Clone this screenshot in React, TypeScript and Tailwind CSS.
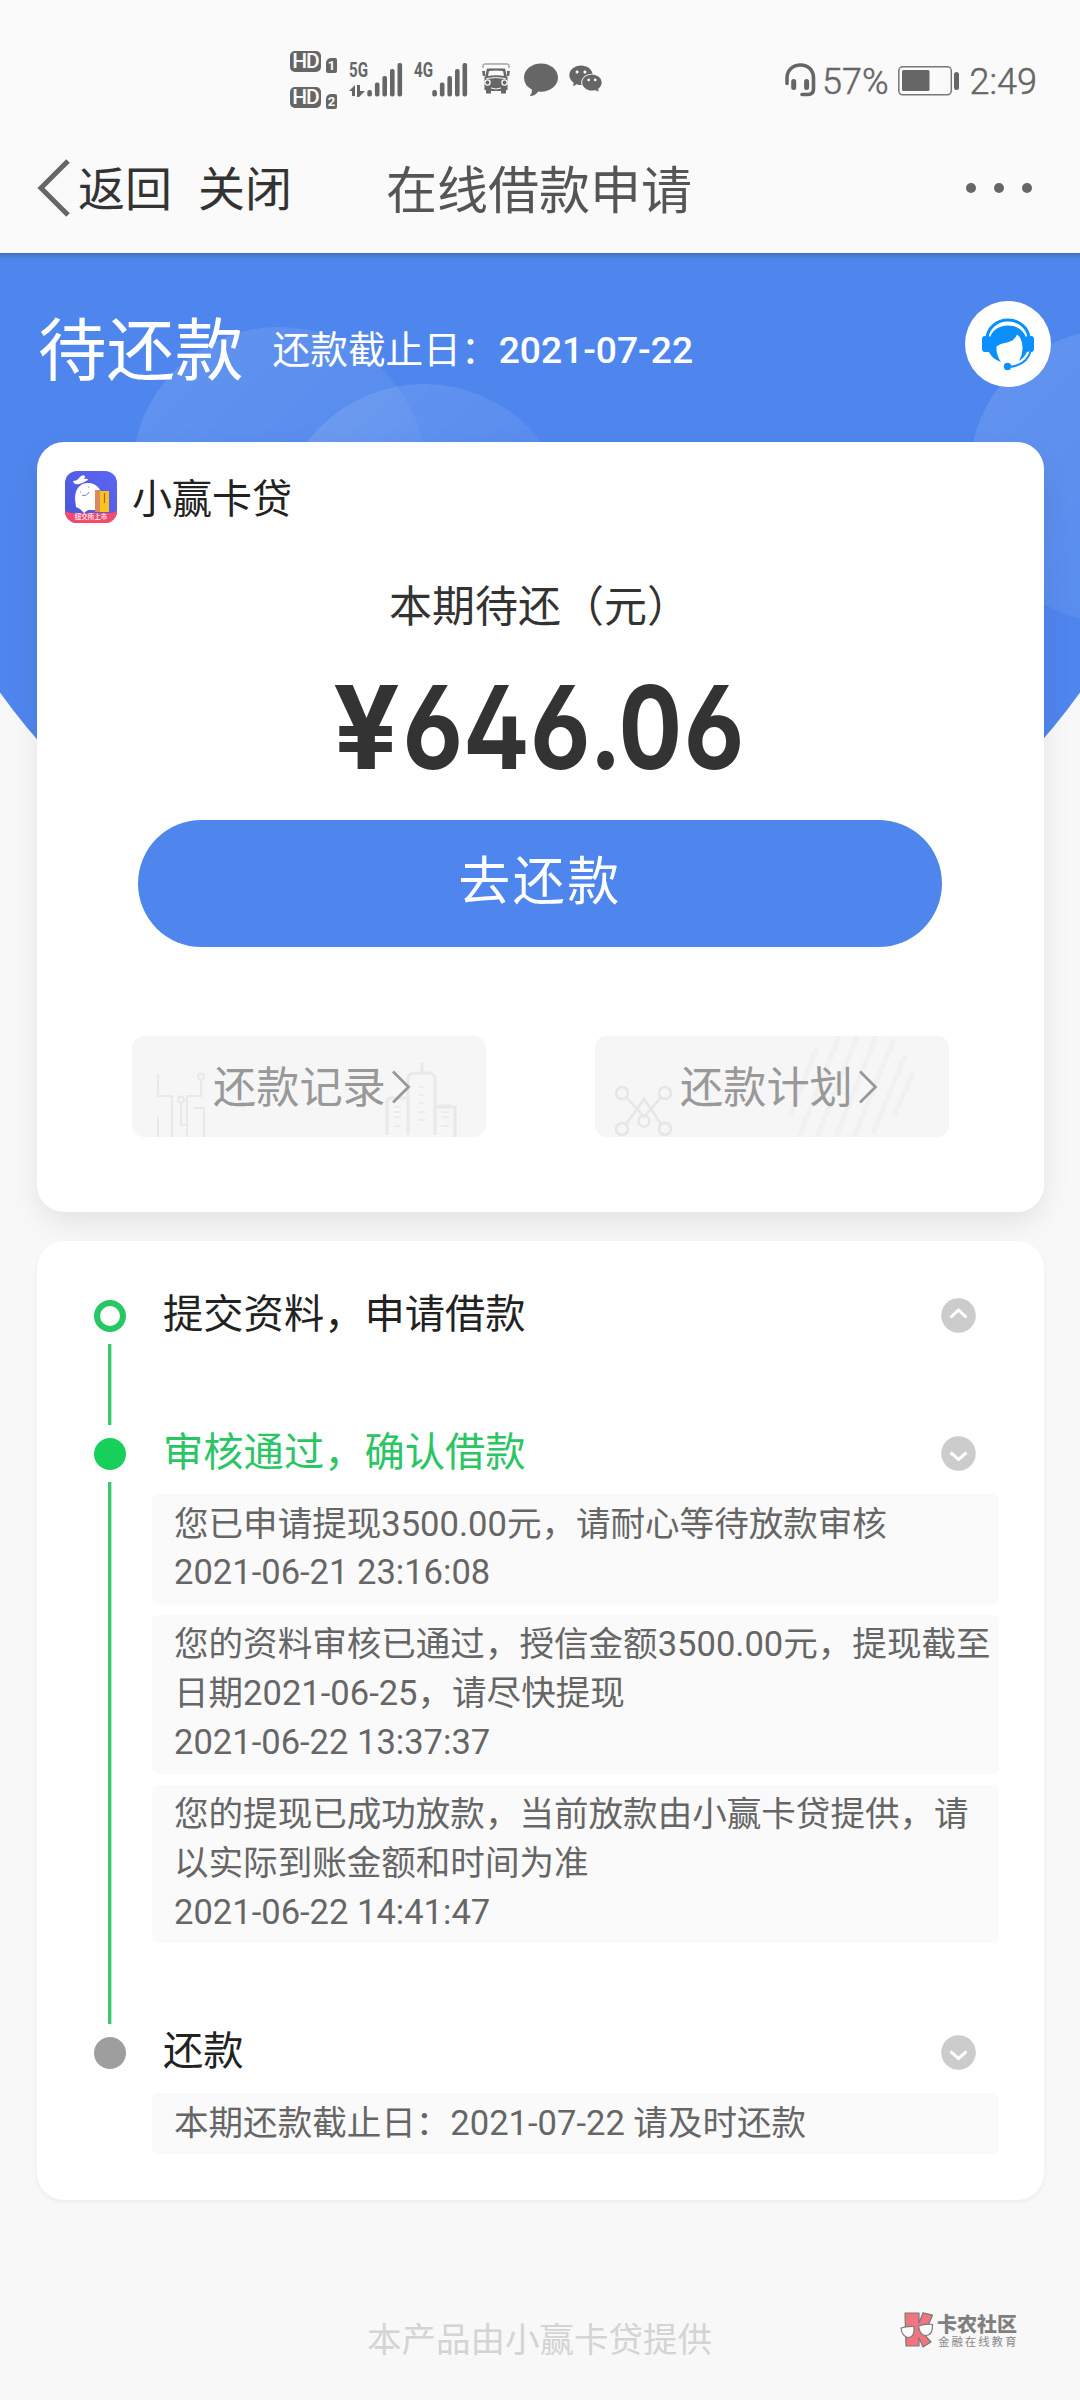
import React from "react";
import { AiFillWechat } from "react-icons/ai";

const CJK = "font-[Roboto,'Noto_Sans_CJK_SC',sans-serif]";

function HdBadge({ sim }: { sim: string }) {
  return (
    <div className="flex h-[22px] items-start gap-[5px]">
      <span className="flex h-[21px] w-[31px] items-center justify-center rounded-[5px] bg-[#666] text-[21px] font-medium leading-none tracking-[-1px] text-[#fafafa]">
        HD
      </span>
      <span className="mt-[7px] flex h-[15px] w-[11px] items-center justify-center rounded-[2px] rounded-tl-[5px] bg-[#666] text-[13px] font-bold leading-none text-[#fafafa]">
        {sim}
      </span>
    </div>
  );
}

function Signal({ label, arrows }: { label: string; arrows?: boolean }) {
  return (
    <div className="relative h-[34px] w-[54px]">
      <span className="absolute left-0 top-0 origin-left scale-x-[.72] text-[21px] font-bold leading-[15px] text-[#666]">
        {label}
      </span>
      <svg className="absolute inset-0" width="54" height="34" viewBox="0 0 54 34" fill="#666">
        {arrows && <path d="M0 28l6-6v11h-3v-5zM8 22h3v6h5l-6 6h-2z" />}
        <rect x="18.3" y="27" width="4.6" height="6.5" rx="2" />
        <rect x="25.9" y="19.5" width="4.6" height="14" rx="2" />
        <rect x="33.4" y="13" width="4.6" height="20.5" rx="2" />
        <rect x="41" y="6" width="4.6" height="27.5" rx="2" />
        <rect x="48.5" y="0" width="4.6" height="33.5" rx="2" />
      </svg>
    </div>
  );
}

function Truck() {
  return (
    <svg width="28" height="32" viewBox="0 0 28 32" fill="#666">
      <path d="M1 5V2.5Q1 1 2.5 1h23Q27 1 27 2.5V5" fill="none" stroke="#777" strokeWidth="1" />
      <path fillRule="evenodd" d="M5 5.5h18l2 8.500h.5v13H24v3.500h-5V28H9v2.500H4V27H2.500V14H3zM7 8l-1 5q8-1.500 16 0l-1-5q-7-.800-14 0z" />
      <path d="M0 8h3v5H1zM25 8h3l-1 5h-2z" />
      <circle cx="5.500" cy="19.500" r="2.600" fill="#666" stroke="#fafafa" strokeWidth="1.300" />
      <circle cx="22.500" cy="19.500" r="2.600" fill="#666" stroke="#fafafa" strokeWidth="1.300" />
      <path d="M9 25q5 2 10 0M4.500 15.500q9-2 19 0" fill="none" stroke="#fafafa" strokeWidth="1" />
    </svg>
  );
}

function Bubble() {
  return (
    <svg width="34" height="34" viewBox="0 0 34 34" fill="#666">
      <path d="M17 .5C26.500.5 34 6.800 34 14.500S26.500 28.700 17 28.700q-1.500 0-2.700-.200Q11 33 5.800 33q2.500-2.600 2.200-6.300Q0 22.500 0 14.500C0 6.800 7.500.5 17 .5z" />
    </svg>
  );
}

function StatusBar() {
  return (
    <div className="flex h-[125px] pl-[290px] pr-[43px] text-[#666]">
      <div className="mt-[51px] flex flex-col gap-[14px]">
        <HdBadge sim="1" />
        <HdBadge sim="2" />
      </div>
      <div className="mt-[63px] flex h-[34px] gap-[11px] pl-[12px]">
        <Signal label="5G" arrows />
        <Signal label="4G" />
      </div>
      <div className="mt-[63px] flex h-[34px] pl-[14px]">
        <Truck />
        <div className="pl-[14px]">
          <Bubble />
        </div>
        <AiFillWechat className="-mt-[3px] ml-[9px] size-[37px] text-[#666]" />
      </div>
      <div className="ml-auto mt-[61px] flex h-[40px] items-center">
        <svg className="-mt-[2px]" width="31" height="34" viewBox="0 0 31 34" fill="none" stroke="#666" strokeWidth="3.6" strokeLinecap="round">
          <path d="M2 20.500V15C2 7 8 2 15.500 2S28.500 7 28.500 15v11q0 5.500-5.500 5.500h-6" />
          <path d="M8.700 18.500v6M21.600 18.500v6" strokeWidth="5" />
        </svg>
        <span className="ml-[6px] mt-[2px] text-[36px] font-light leading-none [-webkit-text-stroke:.5px_#666]">57%</span>
        <svg className="-mt-[1px] ml-[9px]" width="62" height="30" viewBox="0 0 62 30">
          <rect x=".8" y=".8" width="52.500" height="28" rx="4" fill="none" stroke="#777" strokeWidth="1.500" />
          <rect x="4" y="4" width="27.500" height="21" rx="1.500" fill="#666" />
          <rect x="56" y="6" width="5" height="18" rx="2.500" fill="#666" />
        </svg>
        <span className="ml-[10px] mt-[2px] text-[36px] font-light leading-none [-webkit-text-stroke:.5px_#666]">2:49</span>
      </div>
    </div>
  );
}

function NavBar() {
  return (
    <div className="relative flex h-[128px] items-center pb-[2px] pl-[36px] pr-[48px]">
      <svg width="36" height="60" viewBox="0 0 36 60" fill="none" stroke="#666" strokeWidth="5">
        <path d="M32 3L5 30l27 27" />
      </svg>
      <span className="ml-[6px] mt-[3px] text-[47px] leading-none text-[#333]">返回</span>
      <span className="ml-[26px] mt-[3px] text-[47px] leading-none text-[#333]">关闭</span>
      <span className="ml-[94px] mt-[6px] text-[51px] leading-none text-[#555]">在线借款申请</span>
      <span className="ml-auto flex gap-[18px]">
        <i className="size-[10px] rounded-full bg-[#666]" />
        <i className="size-[10px] rounded-full bg-[#666]" />
        <i className="size-[10px] rounded-full bg-[#666]" />
      </span>
    </div>
  );
}

function Backdrop() {
  return (
    <div className="absolute inset-x-0 top-0 h-[740px] overflow-hidden">
      <div className="absolute -left-[124px] -top-[611px] size-[1328px] rounded-full bg-[#4f86ed]" />
      <div className="absolute left-[132px] top-[74px] size-[294px] rounded-full bg-linear-to-br from-white/12 to-transparent" />
      <div className="absolute left-[277px] top-[131px] size-[294px] rounded-full bg-linear-to-br from-white/13 to-transparent" />
      <div className="absolute left-[969px] top-[76px] size-[294px] rounded-full bg-linear-to-br from-white/12 to-white/2" />
      <div className="absolute inset-x-0 top-0 h-[6px] bg-linear-to-b from-[#4470b5] to-transparent" />
    </div>
  );
}

function ServiceIcon() {
  return (
    <svg width="54" height="54" viewBox="0 0 54 54">
      <path d="M6 22a21 19 0 0 1 42 0" fill="none" stroke="#0b90fb" strokeWidth="3" />
      <path
        d="M8 35V24C10 13 18 8.500 27 8.500S44 13 46 24v11q-3 6-8 9 4-7 3.500-14-.5-9-5.500-12.500-2 6-10 8-7 1-10.500 4Q15 38 20 45 11 42 8 35z"
        fill="#0b90fb"
      />
      <rect x="1" y="19" width="9" height="16" rx="3" fill="#0b90fb" />
      <rect x="44" y="19" width="9" height="16" rx="3" fill="#0b90fb" />
      <path d="M50 35Q46 49 27 50" fill="none" stroke="#fff" strokeWidth="5" />
      <path d="M50 33Q46 49 27 50" fill="none" stroke="#0b90fb" strokeWidth="2" />
      <circle cx="26.500" cy="49.500" r="3.700" fill="#0b90fb" />
    </svg>
  );
}

function AppLogo() {
  return (
    <div className="relative size-[52px] overflow-hidden rounded-[12px] bg-linear-to-bl from-[#5e66f2] to-[#4a55dd]">
      <svg className="absolute inset-0" width="52" height="52" viewBox="0 0 52 52">
        <path d="M10 28c0-10 5-16 13-16 9 0 14 7 14 15v12H23l-4 3-4-4-4-2z" fill="#fff" />
        <path d="M8 10q4 0 6-3 3-4 6-2 0 2-1 3 4-1 4 1-5 3-9 4-5 1-6-3z" fill="#fff" />
        <path d="M17 24q4 2 7-3M15 21h1M23 16h1" stroke="#7b78c8" fill="none" strokeWidth="1" />
        <rect x="30" y="19" width="5" height="22" fill="#d98a5f" />
        <rect x="35" y="20" width="9" height="21" fill="#f9c31f" />
        <path d="M39.500 22v10" stroke="#a66a15" strokeWidth="1.200" />
        <path d="M0 40l6 2h40l6-2v12H0z" fill="#f4496b" />
      </svg>
      <span className="absolute inset-x-0 bottom-[2px] text-center text-[6.500px] font-medium leading-[8px] text-white">纽交所上市</span>
    </div>
  );
}

function Chevron() {
  return (
    <svg className="-mt-[3px] ml-[5px]" width="20" height="34" viewBox="0 0 20 34" fill="none" stroke="#999" strokeWidth="2.800">
      <path d="M2 1.500L17.500 17 2 32.500" />
    </svg>
  );
}

function CityArt() {
  return (
    <svg className="absolute inset-0" width="354" height="101" viewBox="0 0 354 101" fill="none" stroke="#e9e9e9" strokeWidth="2">
      <path d="M26 38v22h14v41M26 81v20M69 44v16H55v41M49 67v22h6M62 72h10v29" />
      <circle cx="69" cy="40.500" r="3" />
      <circle cx="49" cy="63.500" r="3" />
      <path strokeWidth="3" d="M255 99V66q0-4 4-4h15M276 99V43q0-6 7-6h13q7 0 7 6v56M290 27v10M303 99V71h20v30M307 70h13" />
      <path strokeWidth="1.500" d="M286 51h7M286 59h7M286 67h7M286 76h7M286 84h7M262 71h7M262 76h7M262 81h7M262 90h7M309 76h8M309 81h8M309 90h8" />
    </svg>
  );
}

function NodesArt() {
  return (
    <svg className="absolute inset-0" width="354" height="101" viewBox="0 0 354 101" fill="none" stroke="#e6e6e6" strokeWidth="2.500">
      <circle cx="27" cy="57" r="6" />
      <circle cx="70" cy="57" r="6" />
      <circle cx="27" cy="93" r="6" />
      <circle cx="70" cy="93" r="6" />
      <circle cx="49" cy="85" r="5.500" />
      <path d="M31 61l11 12 7-10 7 10 10-12M31 88l11-15 7 8 7-8 10 15" />
      <path
        stroke="#f1f1f1"
        strokeWidth="5"
        d="M222 12L195 80M244 0L204 101M262 0L222 101M281 0L241 101M299 3L259 101M310 20L278 97M318 37L299 80"
      />
    </svg>
  );
}

function LinkTile({ label, art, className }: { label: string; art: React.ReactNode; className: string }) {
  return (
    <div className={`relative flex h-[101px] w-[354px] items-center overflow-hidden rounded-[12px] bg-[#f6f6f6] pt-[4px] ${className}`}>
      {art}
      <span className="relative flex items-center text-[43.200px] font-normal leading-none text-[#999]">
        {label}
        <Chevron />
      </span>
    </div>
  );
}

function Amount() {
  return (
    <div className="mt-[39px] flex h-[120px] whitespace-nowrap pl-[296px] font-[Inter,sans-serif] text-[115px] font-bold leading-[120px] text-[#333] [font-feature-settings:'cv02','cv03','tnum']">
      <span className="w-[68px] origin-left scale-x-[1.02]">¥</span>
      <span className="origin-left scale-x-[.857]">646.06</span>
    </div>
  );
}

function LoanCard() {
  return (
    <section className="relative mx-[37px] flex h-[770px] w-[1007px] flex-col rounded-[27px] bg-white shadow-[0_12px_32px_-4px_rgba(0,0,0,0.1)]">
      <div className="mt-[29px] flex h-[52px] items-center gap-[15px] pl-[28px]">
        <AppLogo />
        <span className="mt-[5px] text-[40px] leading-none text-[#222]">小赢卡贷</span>
      </div>
      <div className="mt-[62px] pl-[352px] text-[43px] leading-[44px] text-[#333]">本期待还（元）</div>
      <Amount />
      <button className="ml-[101px] mt-[32px] flex h-[127px] w-[804px] items-center justify-center rounded-full bg-[#4f86ed] pb-[1px] text-[52px] leading-none tracking-[2.500px] text-white">
        去还款
      </button>
      <div className="ml-[95px] mt-[89px] flex gap-[109px]">
        <LinkTile label="还款记录" art={<CityArt />} className="pl-[81px]" />
        <LinkTile label="还款计划" art={<NodesArt />} className="pl-[85px]" />
      </div>
    </section>
  );
}

function Toggle({ up }: { up?: boolean }) {
  return (
    <svg className="-mt-px ml-auto" width="35" height="35" viewBox="0 0 35 35">
      <circle cx="17.500" cy="17.500" r="17.300" fill="#ccc" />
      <path d={up ? "M9.500 19.500l8-7.500 8 7.500" : "M9.500 16.500l8 7 8-7"} fill="none" stroke="#fff" strokeWidth="3" />
    </svg>
  );
}

function Note({ lines }: { lines: string[] }) {
  return (
    <div className="rounded-[6px] bg-[#fafafa] px-[22px] pb-[6.500px] pt-[5.500px] text-[34.550px] leading-[48.900px] text-[#666]">
      {lines.map((line) => (
        <p key={line} className="whitespace-nowrap">
          {line}
        </p>
      ))}
    </div>
  );
}

function Step({
  dot,
  line,
  title,
  titleClass,
  up,
  className,
  children,
}: {
  dot: string;
  line: boolean;
  title: string;
  titleClass: string;
  up?: boolean;
  className: string;
  children?: React.ReactNode;
}) {
  return (
    <div className={`flex ${className}`}>
      <div className="flex w-[32px] flex-col items-center">
        <span className={`size-[32px] shrink-0 rounded-full ${dot}`} />
        {line && <span className="mb-[13px] mt-[12px] w-[4px] grow border-r border-[#b5ecc8] bg-[#3cc86e]" />}
      </div>
      <div className="ml-[26px] w-[847px]">
        <div className="flex h-[32px] items-center pl-[11px] pr-[23px]">
          <span className={`relative -top-[1px] text-[40.300px] leading-none ${titleClass}`}>{title}</span>
          <Toggle up={up} />
        </div>
        <div className="mt-[24px] flex flex-col gap-[11px]">{children}</div>
      </div>
    </div>
  );
}

function Timeline() {
  return (
    <section className="relative mx-[37px] mt-[29px] h-[959px] w-[1007px] rounded-[27px] bg-white pl-[57px] pt-[59px] shadow-[0_2px_5px_rgba(0,0,0,0.05)]">
      <Step dot="border-[6px] border-[#27c763]" line title="提交资料，申请借款" titleClass="text-[#222]" up className="h-[138px]" />
      <Step dot="bg-[#16d05a]" line title="审核通过，确认借款" titleClass="text-[#2cc566]" className="h-[599px]">
        <Note lines={["您已申请提现3500.00元，请耐心等待放款审核", "2021-06-21 23:16:08"]} />
        <Note lines={["您的资料审核已通过，授信金额3500.00元，提现截至", "日期2021-06-25，请尽快提现", "2021-06-22 13:37:37"]} />
        <Note lines={["您的提现已成功放款，当前放款由小赢卡贷提供，请", "以实际到账金额和时间为准", "2021-06-22 14:41:47"]} />
      </Step>
      <Step dot="bg-[#9e9e9e]" line={false} title="还款" titleClass="text-[#222]" className="">
        <Note lines={["本期还款截止日：2021-07-22 请及时还款"]} />
      </Step>
    </section>
  );
}

function Watermark() {
  return (
    <div className="absolute left-[900px] top-[112px] flex">
      <svg width="34" height="36" viewBox="0 0 34 36" stroke="#7a7a7a" strokeWidth="1.200" strokeLinejoin="round">
        <path d="M5 1h14v10l4-10.200 9.500 2.400L27 16l-4 5 8 9-8 5-4-9v8H6z" fill="#ef7580" />
        <path d="M1 16q6-2 13-1.500Q15 25 8.500 25.500 2 25 1 16z" fill="#fafafa" />
        <path d="M18.500 14q7-2.500 14-1.500.5 10-6 11-6.500.5-8-9.500z" fill="#fafafa" />
      </svg>
      <div className="ml-[3px] flex flex-col whitespace-nowrap">
        <span className="mt-[3px] text-[20px] font-black leading-[20px] text-[#808080]">卡农社区</span>
        <span className="ml-[1px] mt-[1px] text-[11.500px] leading-[12px] tracking-[1.900px] text-[#888]">金融在线教育</span>
      </div>
    </div>
  );
}

export default function App() {
  return (
    <div className={`h-[2400px] w-[1080px] overflow-hidden bg-[#f8f8f8] ${CJK}`}>
      <header className="h-[253px] bg-[#fafafa]">
        <StatusBar />
        <NavBar />
      </header>
      <main className="relative">
        <Backdrop />
        <div className="relative flex h-[189px] items-center pl-[38px] pr-[29px] text-white">
          <h1 className="mt-[9px] text-[68.500px] font-normal leading-none">待还款</h1>
          <p className="ml-[29px] mt-[7px] text-[37.700px] leading-none">
            还款截止日：<span className="text-[37.200px] font-medium">2021-07-22</span>
          </p>
          <div className="mb-[7px] ml-auto flex size-[86px] items-center justify-center rounded-full bg-white">
            <ServiceIcon />
          </div>
        </div>
        <LoanCard />
        <Timeline />
        <footer className="relative h-[200px]">
          <p className="pl-[367px] pt-[122px] text-[34.500px] leading-[36px] text-[#d4d4d4]">本产品由小赢卡贷提供</p>
          <Watermark />
        </footer>
      </main>
    </div>
  );
}
